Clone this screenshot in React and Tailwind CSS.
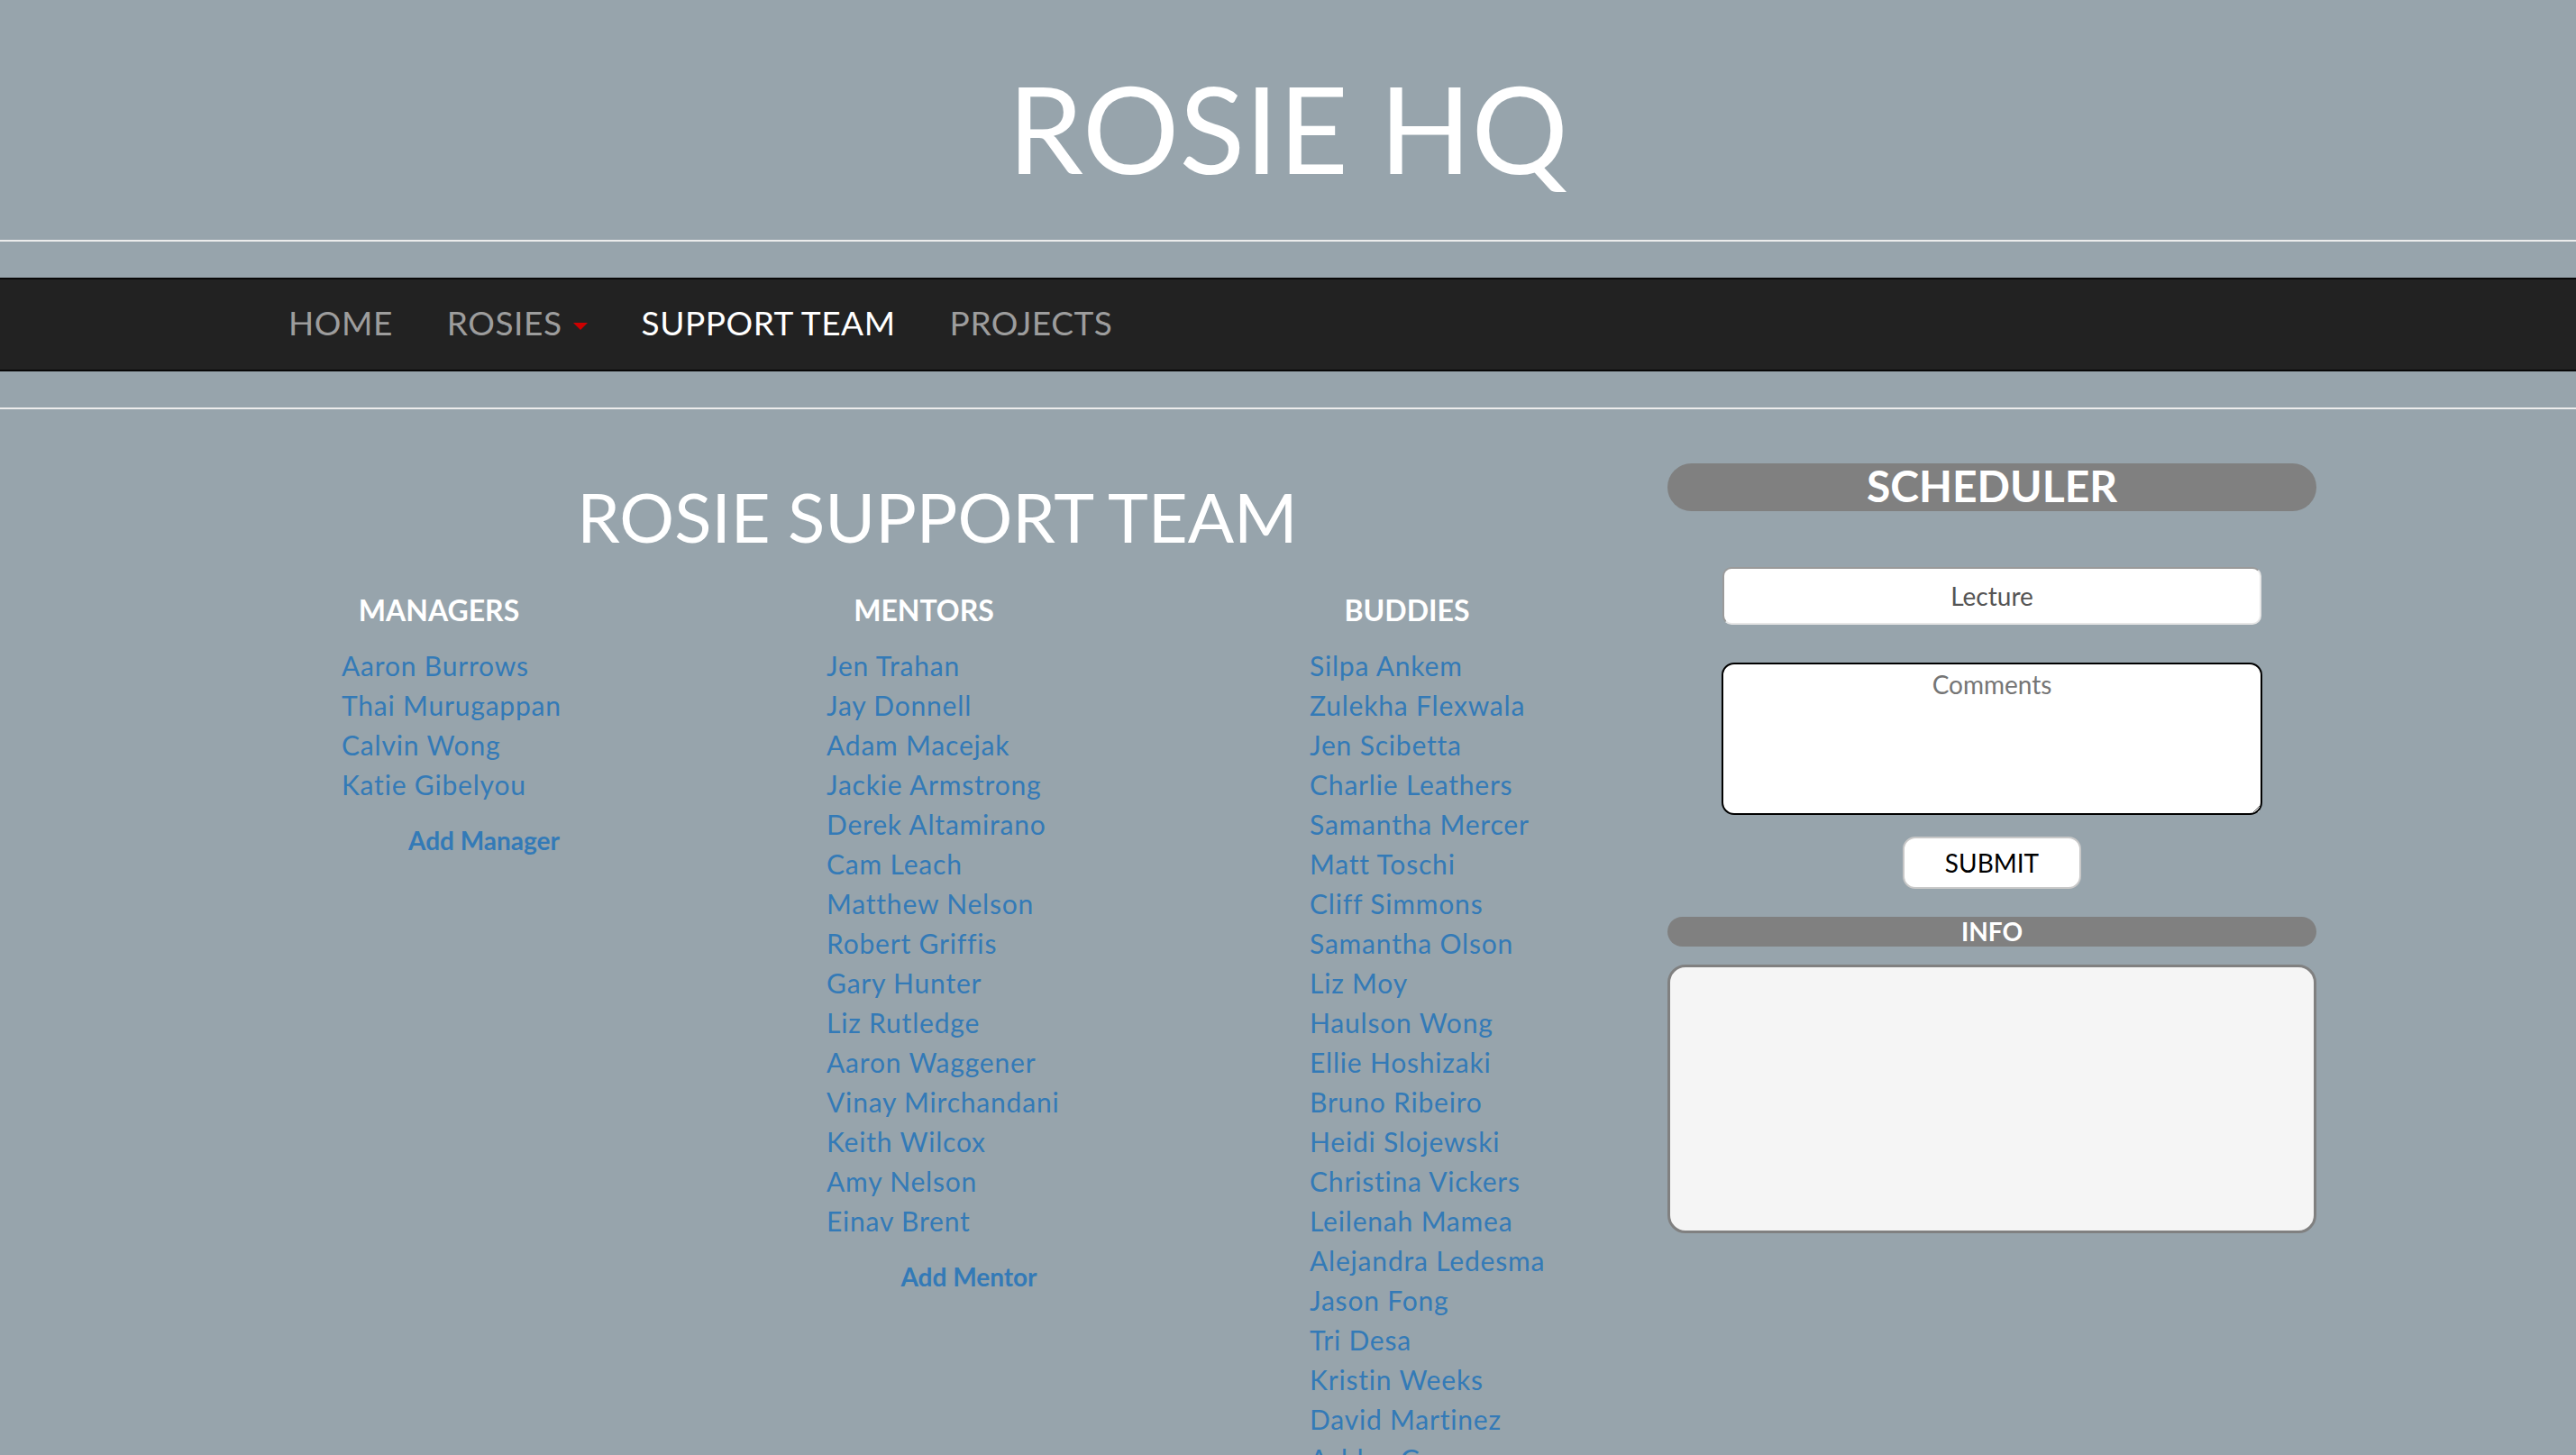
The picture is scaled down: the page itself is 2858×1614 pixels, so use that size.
import React from 'react';

const managers = ['Aaron Burrows', 'Thai Murugappan', 'Calvin Wong', 'Katie Gibelyou'];

const mentors = [
    'Jen Trahan',
    'Jay Donnell',
    'Adam Macejak',
    'Jackie Armstrong',
    'Derek Altamirano',
    'Cam Leach',
    'Matthew Nelson',
    'Robert Griffis',
    'Gary Hunter',
    'Liz Rutledge',
    'Aaron Waggener',
    'Vinay Mirchandani',
    'Keith Wilcox',
    'Amy Nelson',
    'Einav Brent',
];

const buddies = [
    'Silpa Ankem',
    'Zulekha Flexwala',
    'Jen Scibetta',
    'Charlie Leathers',
    'Samantha Mercer',
    'Matt Toschi',
    'Cliff Simmons',
    'Samantha Olson',
    'Liz Moy',
    'Haulson Wong',
    'Ellie Hoshizaki',
    'Bruno Ribeiro',
    'Heidi Slojewski',
    'Christina Vickers',
    'Leilenah Mamea',
    'Alejandra Ledesma',
    'Jason Fong',
    'Tri Desa',
    'Kristin Weeks',
    'David Martinez',
    'Ashley Gray',
];

const TeamColumn = ({ title, people, addLabel, width }) => (
    <div className={width}>
        <h4 className="w-[216px] text-center text-white text-[32px] font-bold leading-none">{title}</h4>
        <ul className="mt-[23px]">
            {people.map((name) => (
                <li key={name} className="text-[30px] leading-[44px] tracking-[0.027em] text-[#337ab7] whitespace-nowrap">
                    {name}
                </li>
            ))}
        </ul>
        {addLabel && (
            <div className="mt-[18px] w-[316px] text-center text-[28px] leading-[44px] font-bold text-[#337ab7]">
                {addLabel}
            </div>
        )}
    </div>
);

const App = () => {
    return (
        <div className="min-h-screen bg-[#97a4ac] font-['Lato',sans-serif] overflow-hidden">
            {/* Header */}
            <header className="h-[266px] flex items-center justify-center pt-[18px]">
                <h1 className="text-white text-[134px] leading-none">ROSIE HQ</h1>
            </header>
            <div className="h-[2px] bg-[#ececec]" />

            {/* Navbar */}
            <nav className="mt-[40px] h-[104px] bg-[#222222] border-y-2 border-[#080808] flex items-center pl-[290px] pb-[6px] text-[37px] leading-none tracking-[0.015em]">
                <span className="px-[30px] text-[#9d9d9d]">HOME</span>
                <span className="px-[30px] text-[#9d9d9d] flex items-center">
                    ROSIES
                    <span className="ml-[12px] mt-[9px] w-0 h-0 border-x-[8px] border-x-transparent border-t-[8px] border-t-[#cc0000]" />
                </span>
                <span className="px-[30px] text-white">SUPPORT TEAM</span>
                <span className="px-[30px] text-[#9d9d9d]">PROJECTS</span>
            </nav>
            <div className="mt-[40px] h-[2px] bg-[#ececec]" />

            {/* Content */}
            <main className="flex pl-[379px]">
                <section className="w-[1322px] shrink-0 pt-[81px]">
                    <h1 className="text-center text-white text-[76px] leading-none">ROSIE SUPPORT TEAM</h1>
                    <div className="mt-[50px] flex">
                        <TeamColumn title="MANAGERS" people={managers} addLabel="Add Manager" width="w-[538px]" />
                        <TeamColumn title="MENTORS" people={mentors} addLabel="Add Mentor" width="w-[536px]" />
                        <TeamColumn title="BUDDIES" people={buddies} width="w-[248px]" />
                    </div>
                </section>

                <aside className="ml-[149px] w-[720px] shrink-0 pt-[60px]">
                    <div className="h-[53px] rounded-full bg-[#808080] flex items-center justify-center">
                        <h2 className="text-white text-[48px] font-bold leading-none -mt-[4px]">SCHEDULER</h2>
                    </div>

                    <input
                        type="text"
                        defaultValue="Lecture"
                        className="block mx-auto mt-[62px] w-[598px] h-[64px] bg-white rounded-[10px] border-2 border-t-[#9a9a9a] border-l-[#9a9a9a] border-b-[#e6e6e6] border-r-[#e6e6e6] text-center text-[28px] text-[#555555] outline-none"
                    />

                    <textarea
                        placeholder="Comments"
                        className="block mx-auto mt-[42px] w-[600px] h-[169px] bg-white rounded-[14px] border-2 border-black pt-[1px] text-center text-[28px] text-[#333333] placeholder:text-[#757575] outline-none"
                    />

                    <button className="block mx-auto mt-[24px] w-[198px] h-[58px] bg-white rounded-[14px] border-2 border-[#c8c8c8] text-[28px] text-black leading-none">
                        SUBMIT
                    </button>

                    <div className="mt-[31px] h-[33px] rounded-full bg-[#808080] flex items-center justify-center">
                        <h3 className="text-white text-[28px] font-bold leading-none -mt-[2px]">INFO</h3>
                    </div>

                    <div className="mt-[20px] h-[298px] rounded-[20px] border-[3px] border-[#808080] bg-[#f5f5f5]" />
                </aside>
            </main>
        </div>
    );
};

export default App;
